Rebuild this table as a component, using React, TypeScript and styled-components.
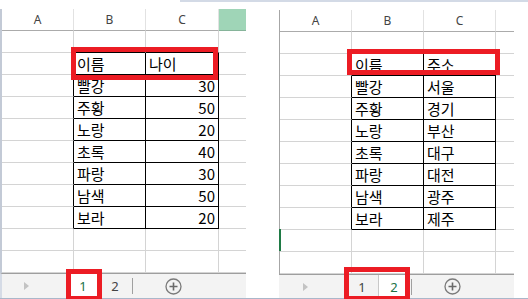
import styled, { createGlobalStyle } from "styled-components";

const GlobalStyle = createGlobalStyle`
  html, body {
    margin: 0;
    padding: 0;
    background: #fff;
  }
  body {
    font-family: "Malgun Gothic", "Noto Sans CJK KR", sans-serif;
  }
`;

const Page = styled.div`
  position: relative;
  width: 528px;
  height: 299px;
  display: flex;
  flex-direction: column;
  overflow: hidden;
`;

const TopStrip = styled.div`
  height: 2px;
  margin-left: 180px;
  background: #d3dae6;
`;

const Panels = styled.div`
  display: flex;
  height: 296px;
`;

const BottomLine = styled.div`
  height: 1px;
  background: #aab7ca;
`;

const Panel = styled.div<{ $w: number; $ml: number; $pt: number }>`
  position: relative;
  box-sizing: border-box;
  width: ${(p) => p.$w}px;
  margin-left: ${(p) => p.$ml}px;
  padding-top: ${(p) => p.$pt}px;
  display: flex;
  flex-direction: column;
`;

const Grid = styled.div<{ $cols: number[]; $edge: string }>`
  display: grid;
  grid-template-columns: ${(p) => p.$cols.map((c) => `${c}px`).join(" ")};
  grid-auto-rows: 22px;
  border-left: ${(p) => p.$edge};
`;

const HeadCell = styled.div<{ $sel?: boolean; $open?: boolean }>`
  box-sizing: border-box;
  display: flex;
  align-items: center;
  justify-content: center;
  font-family: "Noto Sans", "Open Sans", sans-serif;
  font-size: 12px;
  color: #444;
  background: ${(p) => (p.$sel ? "#9fd5b7" : "#fff")};
  border-bottom: 1px solid ${(p) => (p.$sel ? "#86b49a" : "#ababab")};
  border-right: ${(p) => (p.$open ? "none" : "1px solid #e2e2e2")};
`;

const Cell = styled.div<{
  $right?: boolean;
  $open?: boolean;
  $bR?: boolean;
  $bB?: boolean;
  $mark?: boolean;
}>`
  position: relative;
  box-sizing: border-box;
  display: flex;
  align-items: center;
  justify-content: ${(p) => (p.$right ? "flex-end" : "flex-start")};
  padding: 0 3px 1px 3px;
  font-size: 15px;
  line-height: 1;
  color: #000;
  white-space: nowrap;
  border-bottom: 1px solid ${(p) => (p.$bB ? "#000" : "#d4d4d4")};
  border-right: ${(p) => (p.$open ? "none" : `1px solid ${p.$bR ? "#000" : "#d4d4d4"}`)};

  &::before {
    content: "";
    display: ${(p) => (p.$mark ? "block" : "none")};
    position: absolute;
    left: -1px;
    top: -1px;
    bottom: 0;
    width: 2px;
    background: #1f7a45;
  }
`;

const TabBar = styled.div<{ $pad: number; $edge: string }>`
  flex: 1;
  display: flex;
  align-items: stretch;
  padding-left: ${(p) => p.$pad}px;
  background: #f3f3f3;
  border-top: 1px solid #9e9e9e;
  border-left: ${(p) => p.$edge};
`;

const Arrow = styled.div`
  align-self: center;
  width: 0;
  height: 0;
  margin-right: 38px;
  border-left: 5px solid #c3c3c3;
  border-top: 4px solid transparent;
  border-bottom: 4px solid transparent;
`;

const Tab = styled.div<{ $active?: boolean }>`
  box-sizing: border-box;
  width: 32px;
  display: flex;
  align-items: center;
  justify-content: center;
  font-family: "Noto Sans", "Open Sans", sans-serif;
  font-size: 13px;
  color: ${(p) => (p.$active ? "#217346" : "#444")};
  background: ${(p) => (p.$active ? "#fff" : "transparent")};
  border-left: 1px solid ${(p) => (p.$active ? "#c8c8c8" : "transparent")};
  border-right: 1px solid ${(p) => (p.$active ? "#c8c8c8" : "transparent")};
`;

const TabSep = styled.div`
  align-self: center;
  width: 1px;
  height: 16px;
  margin-left: 1px;
  background: #a0a0a0;
`;

const AddBtn = styled.div`
  align-self: center;
  display: flex;
  margin-left: 32px;
`;

const RedBox = styled.div<{ $l: number; $t: number; $w: number; $h: number }>`
  position: absolute;
  box-sizing: border-box;
  left: ${(p) => p.$l}px;
  top: ${(p) => p.$t}px;
  width: ${(p) => p.$w}px;
  height: ${(p) => p.$h}px;
  border: 5px solid #ec1c24;
  z-index: 2;
`;

type Box = { l: number; t: number; w: number; h: number };

interface SheetProps {
  w: number;
  ml: number;
  pt: number;
  cols: number[];
  gridEdge: string;
  tabEdge: string;
  tabPad: number;
  rows: string[][];
  numCol?: number;
  selCol?: number;
  mark?: [number, number];
  activeTab: number;
  boxes: Box[];
}

const LETTERS = ["A", "B", "C", ""];
// bordered table range (data rows / columns)
const T = { r0: 1, r1: 8, c0: 1, c1: 2 };
const inR = (r: number, a: number, b: number) => r >= a && r <= b;

const PlusIcon = () => (
  <svg width="17" height="17" viewBox="0 0 17 17">
    <circle cx="8.5" cy="8.5" r="7.5" fill="none" stroke="#7a7a7a" strokeWidth="1.3" />
    <path d="M8.5 4.5v8M4.5 8.5h8" stroke="#6a6a6a" strokeWidth="1.6" />
  </svg>
);

const SheetView = (s: SheetProps) => {
  const last = s.cols.length - 1;
  return (
    <Panel $w={s.w} $ml={s.ml} $pt={s.pt}>
      <Grid $cols={s.cols} $edge={s.gridEdge}>
        {s.cols.map((_, c) => (
          <HeadCell key={`h${c}`} $sel={s.selCol === c} $open={c === last}>
            {LETTERS[c]}
          </HeadCell>
        ))}
        {s.rows.map((row, r) =>
          s.cols.map((_, c) => (
            <Cell
              key={`${r}-${c}`}
              $right={c === s.numCol && r > 1}
              $open={c === last}
              $bR={inR(r, T.r0, T.r1) && inR(c, T.c0 - 1, T.c1)}
              $bB={inR(c, T.c0, T.c1) && inR(r, T.r0 - 1, T.r1)}
              $mark={!!s.mark && s.mark[0] === r && s.mark[1] === c}
            >
              {row[c] ?? ""}
            </Cell>
          ))
        )}
      </Grid>
      <TabBar $pad={s.tabPad} $edge={s.tabEdge}>
        <Arrow />
        <Tab $active={s.activeTab === 0}>1</Tab>
        <Tab $active={s.activeTab === 1}>2</Tab>
        <TabSep />
        <AddBtn>
          <PlusIcon />
        </AddBtn>
      </TabBar>
      {s.boxes.map((b, i) => (
        <RedBox key={i} $l={b.l} $t={b.t} $w={b.w} $h={b.h} />
      ))}
    </Panel>
  );
};

const names = ["빨강", "주황", "노랑", "초록", "파랑", "남색", "보라"];
const ages = ["30", "50", "20", "40", "30", "50", "20"];
const cities = ["서울", "경기", "부산", "대구", "대전", "광주", "제주"];

const build = (head: string, vals: string[]) => [
  [],
  ["", "이름", head],
  ...names.map((n, i) => ["", n, vals[i]]),
  [],
  [],
];

export default function App() {
  return (
    <>
      <GlobalStyle />
      <Page>
        <TopStrip />
        <Panels>
          <SheetView
            w={246}
            ml={0}
            pt={7}
            cols={[72, 72, 73, 27]}
            gridEdge="2px solid #c3cad6"
            tabEdge="2px solid #d5dbe6"
            tabPad={22}
            rows={build("나이", ages)}
            numCol={2}
            selCol={3}
            activeTab={0}
            boxes={[
              { l: 71, t: 45, w: 147, h: 33 },
              { l: 66, t: 267, w: 36, h: 32 },
            ]}
          />
          <SheetView
            w={235}
            ml={33}
            pt={8}
            cols={[72, 72, 72, 18]}
            gridEdge="1px solid #a6a6a6"
            tabEdge="none"
            tabPad={24}
            rows={build("주소", cities)}
            mark={[9, 0]}
            activeTab={1}
            boxes={[
              { l: 68, t: 47, w: 153, h: 26 },
              { l: 65, t: 265, w: 66, h: 34 },
            ]}
          />
        </Panels>
        <BottomLine />
      </Page>
    </>
  );
}
